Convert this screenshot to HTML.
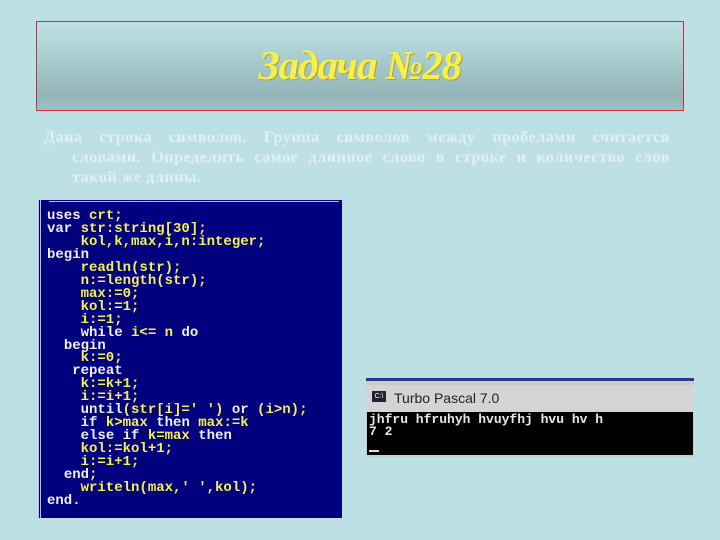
<!DOCTYPE html>
<html><head><meta charset="utf-8"><style>
body{margin:0;width:720px;height:540px;background:#bde0e4;position:relative;overflow:hidden;font-family:"Liberation Serif",serif}
#title{position:absolute;left:36px;top:21px;width:646px;height:88px;border:1px solid #d0303a;background:linear-gradient(#bfe0e4 0%,#acd0d4 35%,#93b4b6 85%,#9cc4c4 100%)}
#title span{position:absolute;left:0;right:0;top:19px;text-align:center;font-size:41px;font-weight:bold;font-style:italic;color:#f5f04a;font-family:"Liberation Serif",serif;letter-spacing:-1px;text-shadow:1px 1px 0 #b0a030}
.l{position:absolute;font-size:16px;font-weight:bold;letter-spacing:0.6px;color:#e2f0f2;text-align:justify;text-align-last:justify;white-space:nowrap;line-height:19px}
#code{position:absolute;left:38px;top:200px;width:301px;height:318px;background:#00007e;border-left:3px double #c0c0d0}
#code pre{margin:0;position:absolute;left:6px;top:10px;font-family:"Liberation Mono",monospace;font-weight:bold;font-size:14px;line-height:12.95px;color:#f8f050}
.w{color:#f0f0f0}
#con{position:absolute;left:366px;top:378px;width:328px;height:79px;background:#c8cccc}
#bar{position:absolute;left:0;top:7px;width:100%;height:27px;background:#d4d4d4;font-family:"Liberation Sans",sans-serif;font-size:14px;color:#222}
#blk{position:absolute;left:1px;top:34px;width:326px;height:43px;background:#000;color:#e8e8e8;font-family:"Liberation Mono",monospace;font-weight:bold;font-size:13px;line-height:12px}
</style></head><body>
<div id="title"><span>Задача №28</span></div>
<div class="l" style="left:44px;top:128px;width:626px">Дана строка символов. Группа символов между пробелами считается</div>
<div class="l" style="left:72px;top:148px;width:598px">словами. Определить самое длинное слово в строке и количество слов</div>
<div class="l" style="left:72px;top:168px;text-align-last:left">такой же длины.</div>
<div id="code"><div style="position:absolute;left:8px;top:1px;width:290px;height:1px;background:#c0c0d0"></div><pre><span class="w">uses</span> crt;
<span class="w">var</span> str:string[30];
    kol,k,max,i,n:integer;
<span class="w">begin</span>
    readln(str);
    n:=length(str);
    max:=0;
    kol:=1;
    i:=1;
    <span class="w">while</span> i&lt;= n <span class="w">do</span>
  <span class="w">begin</span>
    k:=0;
   <span class="w">repeat</span>
    k:=k+1;
    i:=i+1;
    <span class="w">until</span>(str[i]=' ') <span class="w">or</span> (i&gt;n);
    <span class="w">if</span> k&gt;max <span class="w">then</span> max:=k
    <span class="w">else if</span> k=max <span class="w">then</span>
    kol:=kol+1;
    i:=i+1;
  <span class="w">end</span>;
    writeln(max,' ',kol);
<span class="w">end.</span></pre></div>
<div id="con"><div style="position:absolute;left:0;top:0;width:100%;height:3px;background:#2a3a80"></div>
<div id="bar"><span style="position:absolute;left:6px;top:6px;width:14px;height:11px;background:#223;color:#fff;font-size:7px;line-height:11px;text-align:center">C:\</span><span style="position:absolute;left:28px;top:5px">Turbo Pascal 7.0</span></div>
<div id="blk"><div style="position:absolute;left:2px;top:2px;white-space:pre">jhfru hfruhyh hvuyfhj hvu hv h
7 2</div><div style="position:absolute;left:2px;top:38px;width:10px;height:2px;background:#ddd"></div></div></div>
</body></html>
